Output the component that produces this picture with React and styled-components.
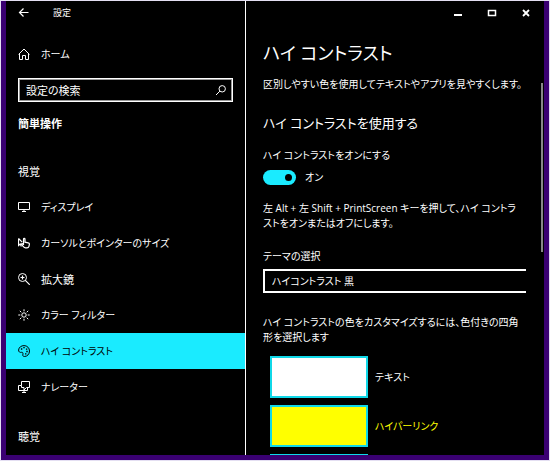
import React, { useState } from 'react'
import styled, { createGlobalStyle } from 'styled-components'

const GlobalStyle = createGlobalStyle`
*{
    box-sizing: border-box;
    margin: 0;
    padding: 0;
}
body{
    background: #e4dff2;
    color: #fff;
    font-family: 'Open Sans', 'Noto Sans CJK JP', sans-serif;
    font-size: 10px;
    line-height: 15px;
    font-feature-settings: 'palt';
}
button, input, select{
    font: inherit;
    font-feature-settings: inherit;
    color: inherit;
    background: none;
    border: none;
    outline: none;
}
`

const Page = styled.div`
    height: 100vh;
    padding: 1px;
`
const Window = styled.div`
    display: flex;
    height: 100%;
    background: #000;
    border: 5px solid #3a0072;
    border-top: none;
`
const Sidebar = styled.aside`
    flex: 0 0 240px;
    overflow: hidden;
    border-right: 1px solid #fff;
`
const TitleBar = styled.header`
    display: flex;
    align-items: center;
    height: 23px;
    padding-left: 12px;
    gap: 23px;
    font-size: 9px;
`
const IconButton = styled.button`
    display: flex;
    align-items: center;
    justify-content: center;
`
const NavLink = styled.a`
    display: flex;
    align-items: center;
    gap: 11px;
    height: 36px;
    padding-left: 12px;
    font-size: ${({ $large }) => ($large ? '11px' : '10px')};
    color: ${({ $active }) => ($active ? '#000' : '#fff')};
    background: ${({ $active }) => ($active ? '#1aebff' : 'transparent')};
    text-decoration: none;
`
const HomeNav = styled.nav`
    margin-top: 12px;
`
const SearchBox = styled.label`
    display: flex;
    align-items: center;
    height: 24px;
    margin: 6px 12px 0;
    padding: 0 5px 0 7px;
    border: 1px solid #fff;
    outline: 1px solid #999;
    outline-offset: -2px;
    font-size: 11px;
`
const SearchInput = styled.input`
    flex: 1;
    min-width: 0;
    &::placeholder{
        color: #fff;
        opacity: 1;
    }
`
const Category = styled.h2`
    margin: 14px 12px 0;
    font-size: 11px;
    line-height: 16px;
`
const GroupTitle = styled.h3`
    margin: ${({ $first }) => ($first ? '32px' : '24px')} 12px 9px;
    font-size: 11px;
    font-weight: 400;
    line-height: 16px;
`
const NavList = styled.ul`
    list-style: none;
`
const Main = styled.main`
    position: relative;
    flex: 1;
    min-width: 0;
    overflow: hidden;
`
const Caption = styled.div`
    display: flex;
    justify-content: flex-end;
    height: 23px;
    padding-right: 1px;
`
const CaptionButton = styled(IconButton)`
    width: 34px;
`
const Content = styled.div`
    padding: 14px 18px 0 17px;
`
const PageTitle = styled.h1`
    font-size: 18px;
    font-weight: 400;
    line-height: 30px;
`
const SectionTitle = styled.h2`
    margin-top: 20px;
    font-size: 13px;
    font-weight: 400;
    line-height: 22px;
`
const Text = styled.p`
    margin-top: ${({ $gap }) => $gap || 0}px;
`
const FieldLabel = styled.label`
    display: block;
    margin-top: ${({ $gap }) => $gap}px;
`
const SwitchRow = styled.div`
    display: flex;
    align-items: center;
    gap: 9px;
    margin-top: 7px;
`
const Switch = styled.input`
    appearance: none;
    display: flex;
    align-items: center;
    justify-content: ${({ checked }) => (checked ? 'flex-end' : 'flex-start')};
    width: 33px;
    height: 15px;
    padding: 0 4px;
    border-radius: 8px;
    background: ${({ checked }) => (checked ? '#1aebff' : '#555')};
    &::after{
        content: '';
        width: 7px;
        height: 7px;
        border-radius: 50%;
        background: #000;
    }
`
const ThemeSelect = styled.select`
    appearance: none;
    display: block;
    width: 100%;
    height: 24px;
    margin-top: 5px;
    padding-left: 7px;
    border: 2px solid #fff;
    border-right: none;
    border-radius: 0;
`
const SwatchList = styled.div`
    display: grid;
    gap: 7px;
    margin: 11px 0 0 7px;
`
const SwatchRow = styled.div`
    display: flex;
    align-items: center;
    gap: 7px;
    color: ${({ $color }) => $color};
`
const Swatch = styled.button`
    width: 98px;
    height: 42px;
    border: 2px solid #10d8e8;
    background: ${({ $color }) => $color};
`
const ScrollThumb = styled.div`
    position: absolute;
    top: 82px;
    right: 1px;
    width: 2px;
    height: 169px;
    background: #888;
`

function Icon({ size = 12, children }) {
    return (
        <svg width={size} height={size} viewBox='0 0 12 12' fill='none' stroke='currentColor' strokeWidth='1' aria-hidden='true'>
            {children}
        </svg>
    )
}

const back = <Icon><path d='M10.5 5.5H1.5M5.5 1.5L1.5 5.5L5.5 9.5' strokeWidth='1.2' /></Icon>
const home = <Icon><path d='M0.6 6.4L6 1L11.4 6.4M1.5 5.5V11.5H4.5V7.5H7.5V11.5H10.5V5.5' /></Icon>
const search = <Icon><circle cx='7.2' cy='4.8' r='3.2' /><path d='M4.9 7.1L1 11' /></Icon>
const display = <Icon><path d='M0.5 1.5H11.5V8.5H0.5ZM4 10.5H8M6 8.5V10.5' /></Icon>
const pointer = (
    <Icon>
        <path d='M0.5 1.5V8.5L2.2 7L3.4 9.6M0.5 1.5L4.2 5.2' strokeWidth='1.2' />
        <path d='M5.5 8V2.2C5.5 1.2 7 1.2 7 2.2V5.2L10.2 5.8C11.2 6 11.5 6.5 11.4 7.3L11 9.2C10.6 10.4 9.9 10.8 9 10.8H7.5C6.5 10.8 6 10.3 5.4 9.6L3.4 7.3C3.3 6.4 4.4 6.2 5.5 7.4' strokeWidth='1.2' />
    </Icon>
)
const magnifier = <Icon><circle cx='4.5' cy='4.5' r='4' /><path d='M7.3 7.3L11.8 11.8M2.5 4.5H6.5M4.5 2.5V6.5' strokeWidth='1.2' /></Icon>
const brightness = (
    <Icon>
        <circle cx='6' cy='6' r='2.2' />
        <path d='M6 0.3V2.3M6 9.7V11.7M0.3 6H2.3M9.7 6H11.7M1.8 1.8L3.3 3.3M8.7 8.7L10.2 10.2M1.8 10.2L3.3 8.7M8.7 3.3L10.2 1.8' />
    </Icon>
)
const palette = (
    <Icon>
        <path d='M0.6 5C0.8 2.3 3.3 0.6 6 0.6C9.2 0.6 11.5 3 11.5 6C11.5 9.2 9.2 11.5 6.4 11.5C4.8 11.5 4.6 10.4 4.9 9.2C5.2 8 4.6 7.1 3.6 7.3C2 7.7 0.5 7 0.6 5Z' />
        <path d='M2.9 4H4.3M5.3 2.7H6.7M7.9 4.2H9.3M8.3 6.5H9.7M7 8.8H8.4' strokeWidth='1.3' />
    </Icon>
)
const narrator = <Icon><path d='M3.5 4.5V0.5H11.5V6.5H8.5L6 9V6.5H3.5V4.5H0.5V9.5H9.5V6.5M4 11.5H8M6 9.5V11.5' /></Icon>

const visionItems = [
    { icon: display, title: 'ディスプレイ' },
    { icon: pointer, title: 'カーソルとポインターのサイズ' },
    { icon: magnifier, title: '拡大鏡', large: true },
    { icon: brightness, title: 'カラー フィルター' },
    { icon: palette, title: 'ハイ コントラスト', active: true },
    { icon: narrator, title: 'ナレーター' },
]

const swatches = [
    { id: 'text', title: 'テキスト', fill: '#fff', color: '#fff' },
    { id: 'hyperlink', title: 'ハイパーリンク', fill: '#ff0', color: '#ff0' },
]

function App() {
    const [enabled, setEnabled] = useState(true)

    return (
        <Page>
            <GlobalStyle />
            <Window>
                <Sidebar>
                    <TitleBar>
                        <IconButton aria-label='戻る'>{back}</IconButton>
                        <span>設定</span>
                    </TitleBar>
                    <HomeNav>
                        <NavLink href='#home'>{home}ホーム</NavLink>
                    </HomeNav>
                    <SearchBox>
                        <SearchInput type='text' placeholder='設定の検索' aria-label='設定の検索' />
                        {search}
                    </SearchBox>
                    <Category>簡単操作</Category>
                    <GroupTitle $first>視覚</GroupTitle>
                    <NavList>
                        {visionItems.map((item) => (
                            <li key={item.title}>
                                <NavLink href='#vision' $active={item.active} $large={item.large}>{item.icon}{item.title}</NavLink>
                            </li>
                        ))}
                    </NavList>
                    <GroupTitle>聴覚</GroupTitle>
                </Sidebar>
                <Main>
                    <Caption>
                        <CaptionButton aria-label='最小化'><Icon><path d='M2 8H10' strokeWidth='2' /></Icon></CaptionButton>
                        <CaptionButton aria-label='最大化'><Icon><path d='M2.5 3.5H9.5V8.5H2.5Z' strokeWidth='1.5' /></Icon></CaptionButton>
                        <CaptionButton aria-label='閉じる'><Icon><path d='M3 3L9 9M9 3L3 9' strokeWidth='1.8' /></Icon></CaptionButton>
                    </Caption>
                    <Content>
                        <PageTitle>ハイ コントラスト</PageTitle>
                        <Text $gap={9}>区別しやすい色を使用してテキストやアプリを見やすくします。</Text>
                        <SectionTitle>ハイ コントラストを使用する</SectionTitle>
                        <FieldLabel htmlFor='contrast' $gap={14}>ハイ コントラストをオンにする</FieldLabel>
                        <SwitchRow>
                            <Switch
                                id='contrast'
                                type='checkbox'
                                role='switch'
                                checked={enabled}
                                onChange={(e) => setEnabled(e.target.checked)}
                            />
                            <span>{enabled ? 'オン' : 'オフ'}</span>
                        </SwitchRow>
                        <Text $gap={16}>
                            左 Alt + 左 Shift + PrintScreen キーを押して、ハイ コントラ<br />
                            ストをオンまたはオフにします。
                        </Text>
                        <FieldLabel htmlFor='theme' $gap={18}>テーマの選択</FieldLabel>
                        <ThemeSelect id='theme'>
                            <option>ハイコントラスト 黒</option>
                        </ThemeSelect>
                        <Text $gap={22}>ハイ コントラストの色をカスタマイズするには、色付きの四角形を選択します</Text>
                        <SwatchList>
                            {swatches.map((item) => (
                                <SwatchRow key={item.id} $color={item.color}>
                                    <Swatch id={item.id} $color={item.fill} />
                                    <label htmlFor={item.id}>{item.title}</label>
                                </SwatchRow>
                            ))}
                            <Swatch $color='#3ff23f' aria-label='無効なテキスト' />
                        </SwatchList>
                    </Content>
                    <ScrollThumb />
                </Main>
            </Window>
        </Page>
    )
}

export default App
